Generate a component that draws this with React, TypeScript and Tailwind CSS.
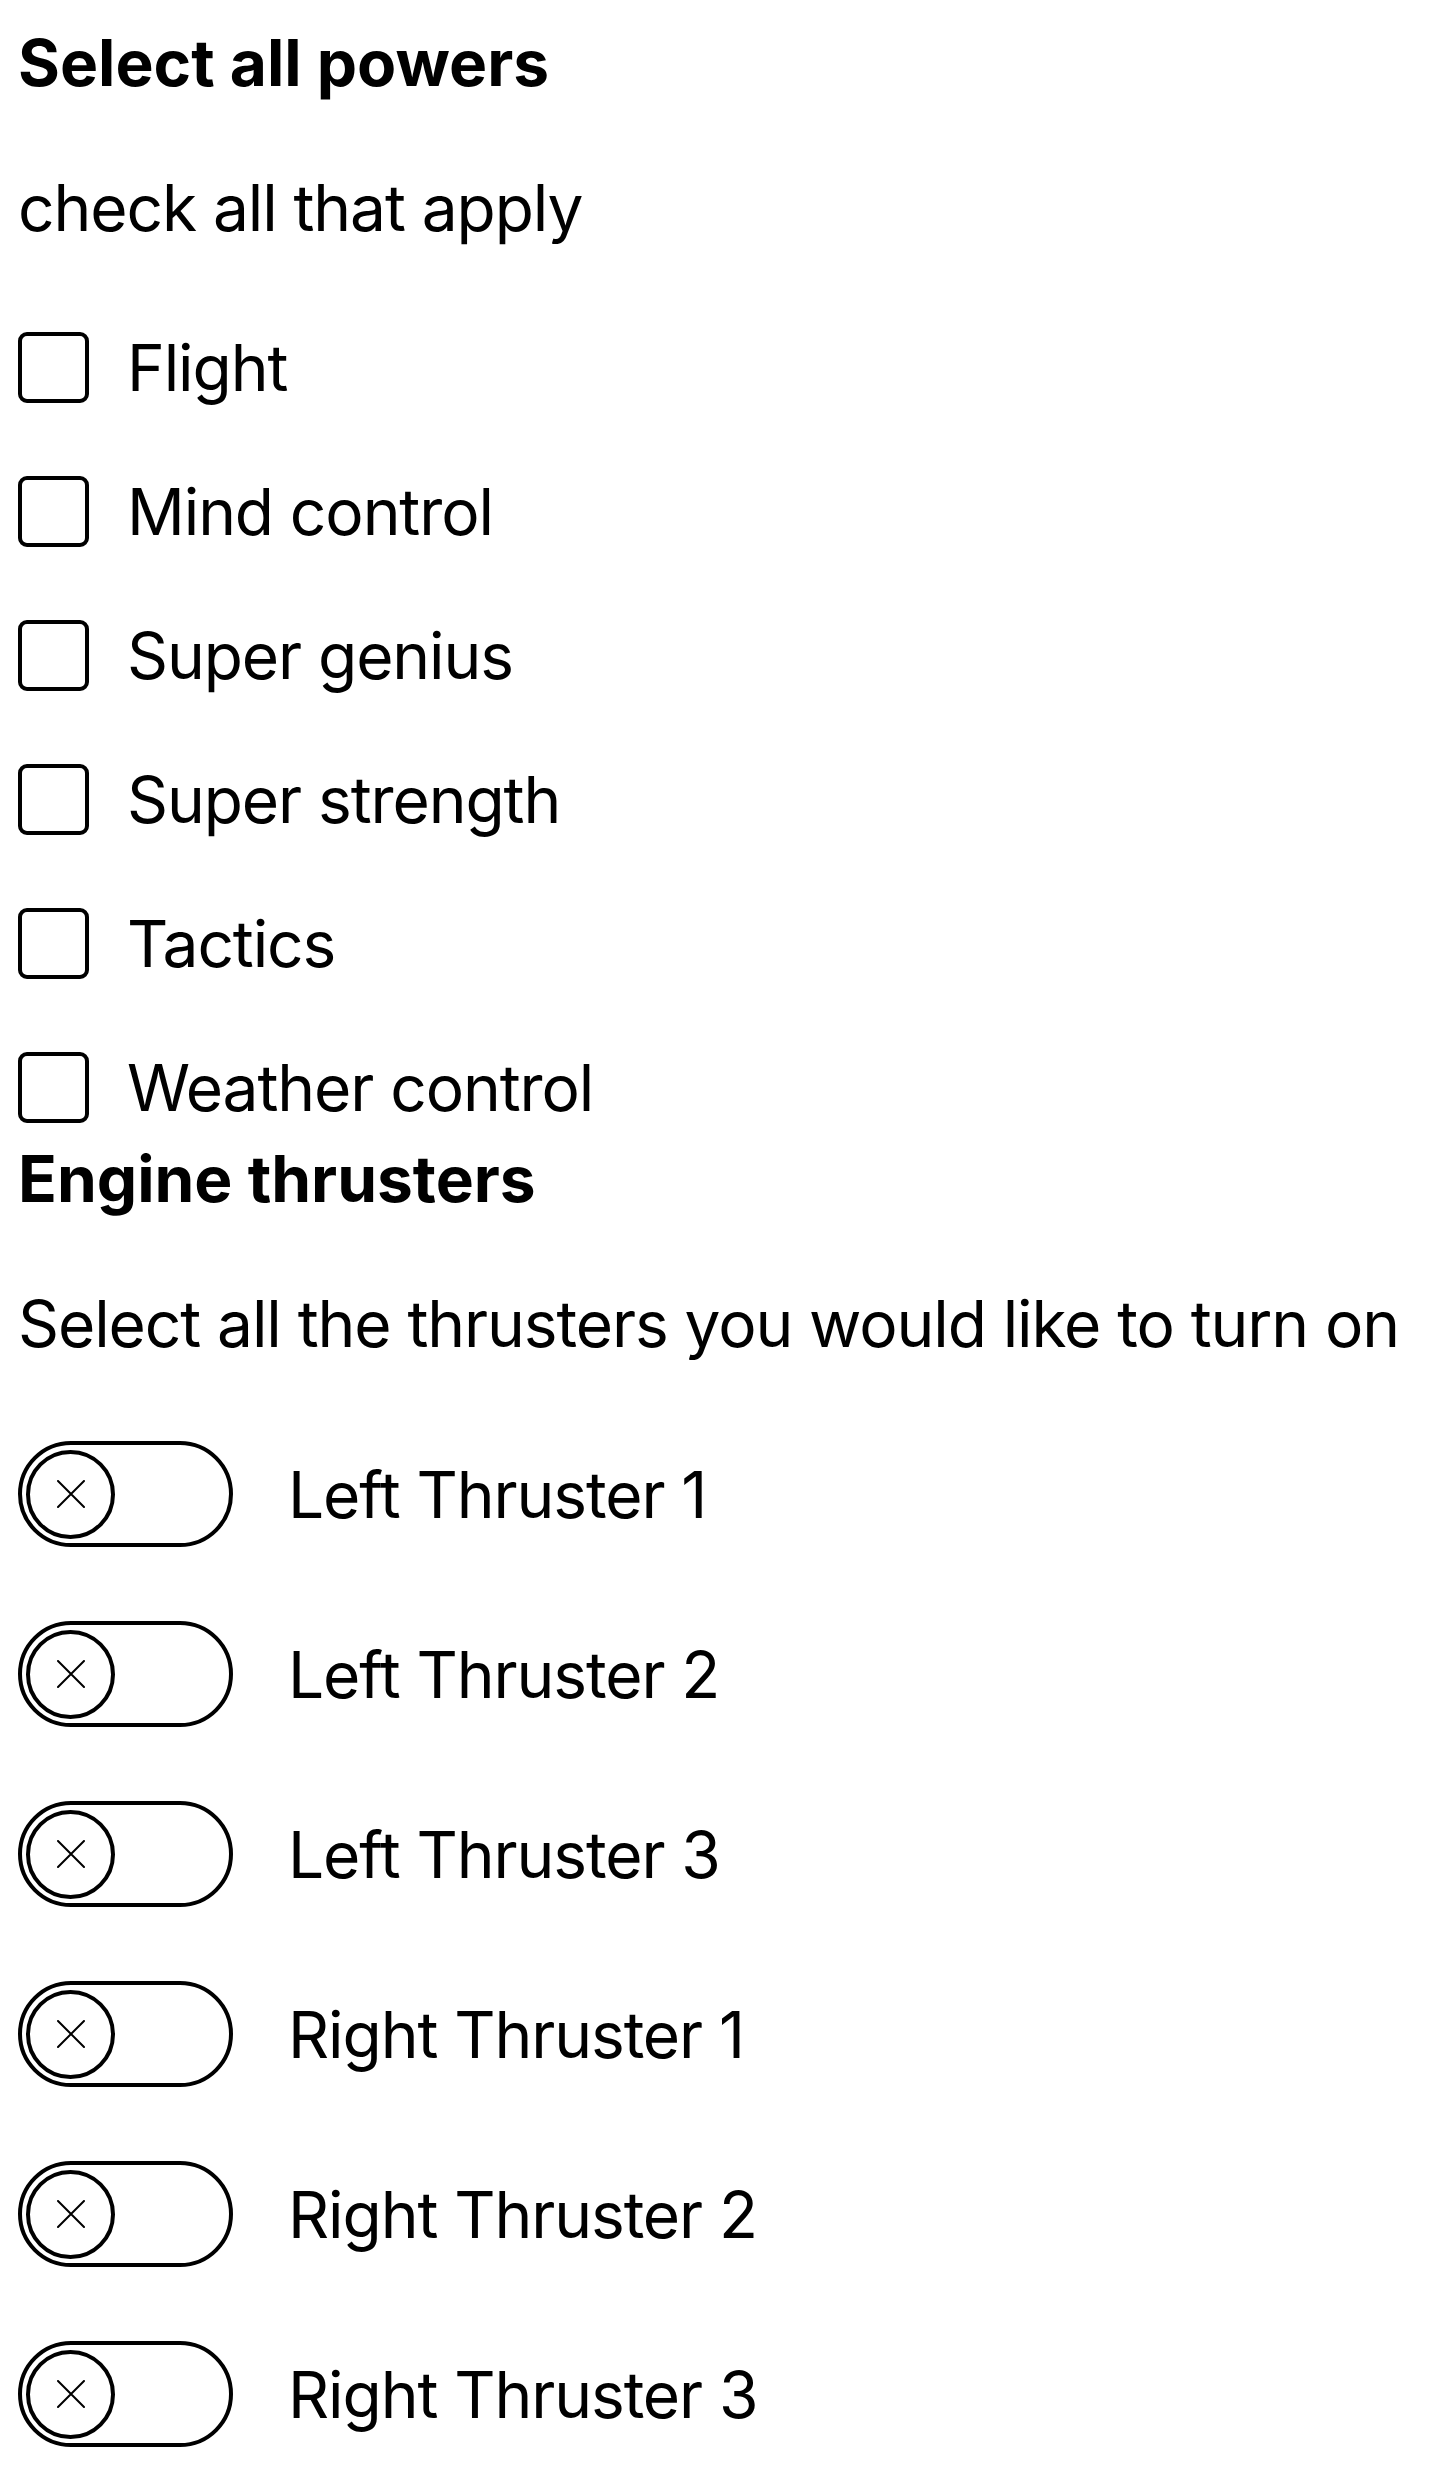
const powers = [
  "Flight",
  "Mind control",
  "Super genius",
  "Super strength",
  "Tactics",
  "Weather control",
];

const thrusters = [
  "Left Thruster 1",
  "Left Thruster 2",
  "Left Thruster 3",
  "Right Thruster 1",
  "Right Thruster 2",
  "Right Thruster 3",
];

function Toggle() {
  return (
    <span className="flex items-center w-[215px] h-[106px] shrink-0 rounded-full border-[4px] border-black pl-[4px]">
      <span className="flex items-center justify-center w-[89px] h-[89px] rounded-full border-[4px] border-black">
        <svg width="28" height="28" viewBox="0 0 28 28" fill="none">
          <path d="M1 1L27 27M27 1L1 27" stroke="black" strokeWidth="2" strokeLinecap="round" />
        </svg>
      </span>
    </span>
  );
}

export default function App() {
  return (
    <div className="min-h-screen bg-white text-black pl-[18px] pt-[24px] font-['Inter','Noto_Sans',sans-serif] text-[64px] leading-[77px] whitespace-nowrap">
      {/* Powers */}
      <section>
        <h2 className="font-bold">Select all powers</h2>
        <p className="mt-[68px] tracking-[-0.017em]">check all that apply</p>
        <div className="mt-[83px] flex flex-col gap-[67px]">
          {powers.map((p) => (
            <label key={p} className="flex items-center h-[77px]">
              <span className="w-[71px] h-[71px] shrink-0 rounded-[9px] border-[4px] border-black" />
              <span className="ml-[38px] tracking-[-0.017em]">{p}</span>
            </label>
          ))}
        </div>
      </section>

      {/* Thrusters */}
      <section className="mt-[14px]">
        <h2 className="font-bold">Engine thrusters</h2>
        <p className="mt-[68px] tracking-[-0.017em]">Select all the thrusters you would like to turn on</p>
        <div className="mt-[79px] flex flex-col gap-[74px]">
          {thrusters.map((t) => (
            <label key={t} className="flex items-center h-[106px]">
              <Toggle />
              <span className="ml-[55px] tracking-[-0.017em]">{t}</span>
            </label>
          ))}
        </div>
      </section>
    </div>
  );
}
